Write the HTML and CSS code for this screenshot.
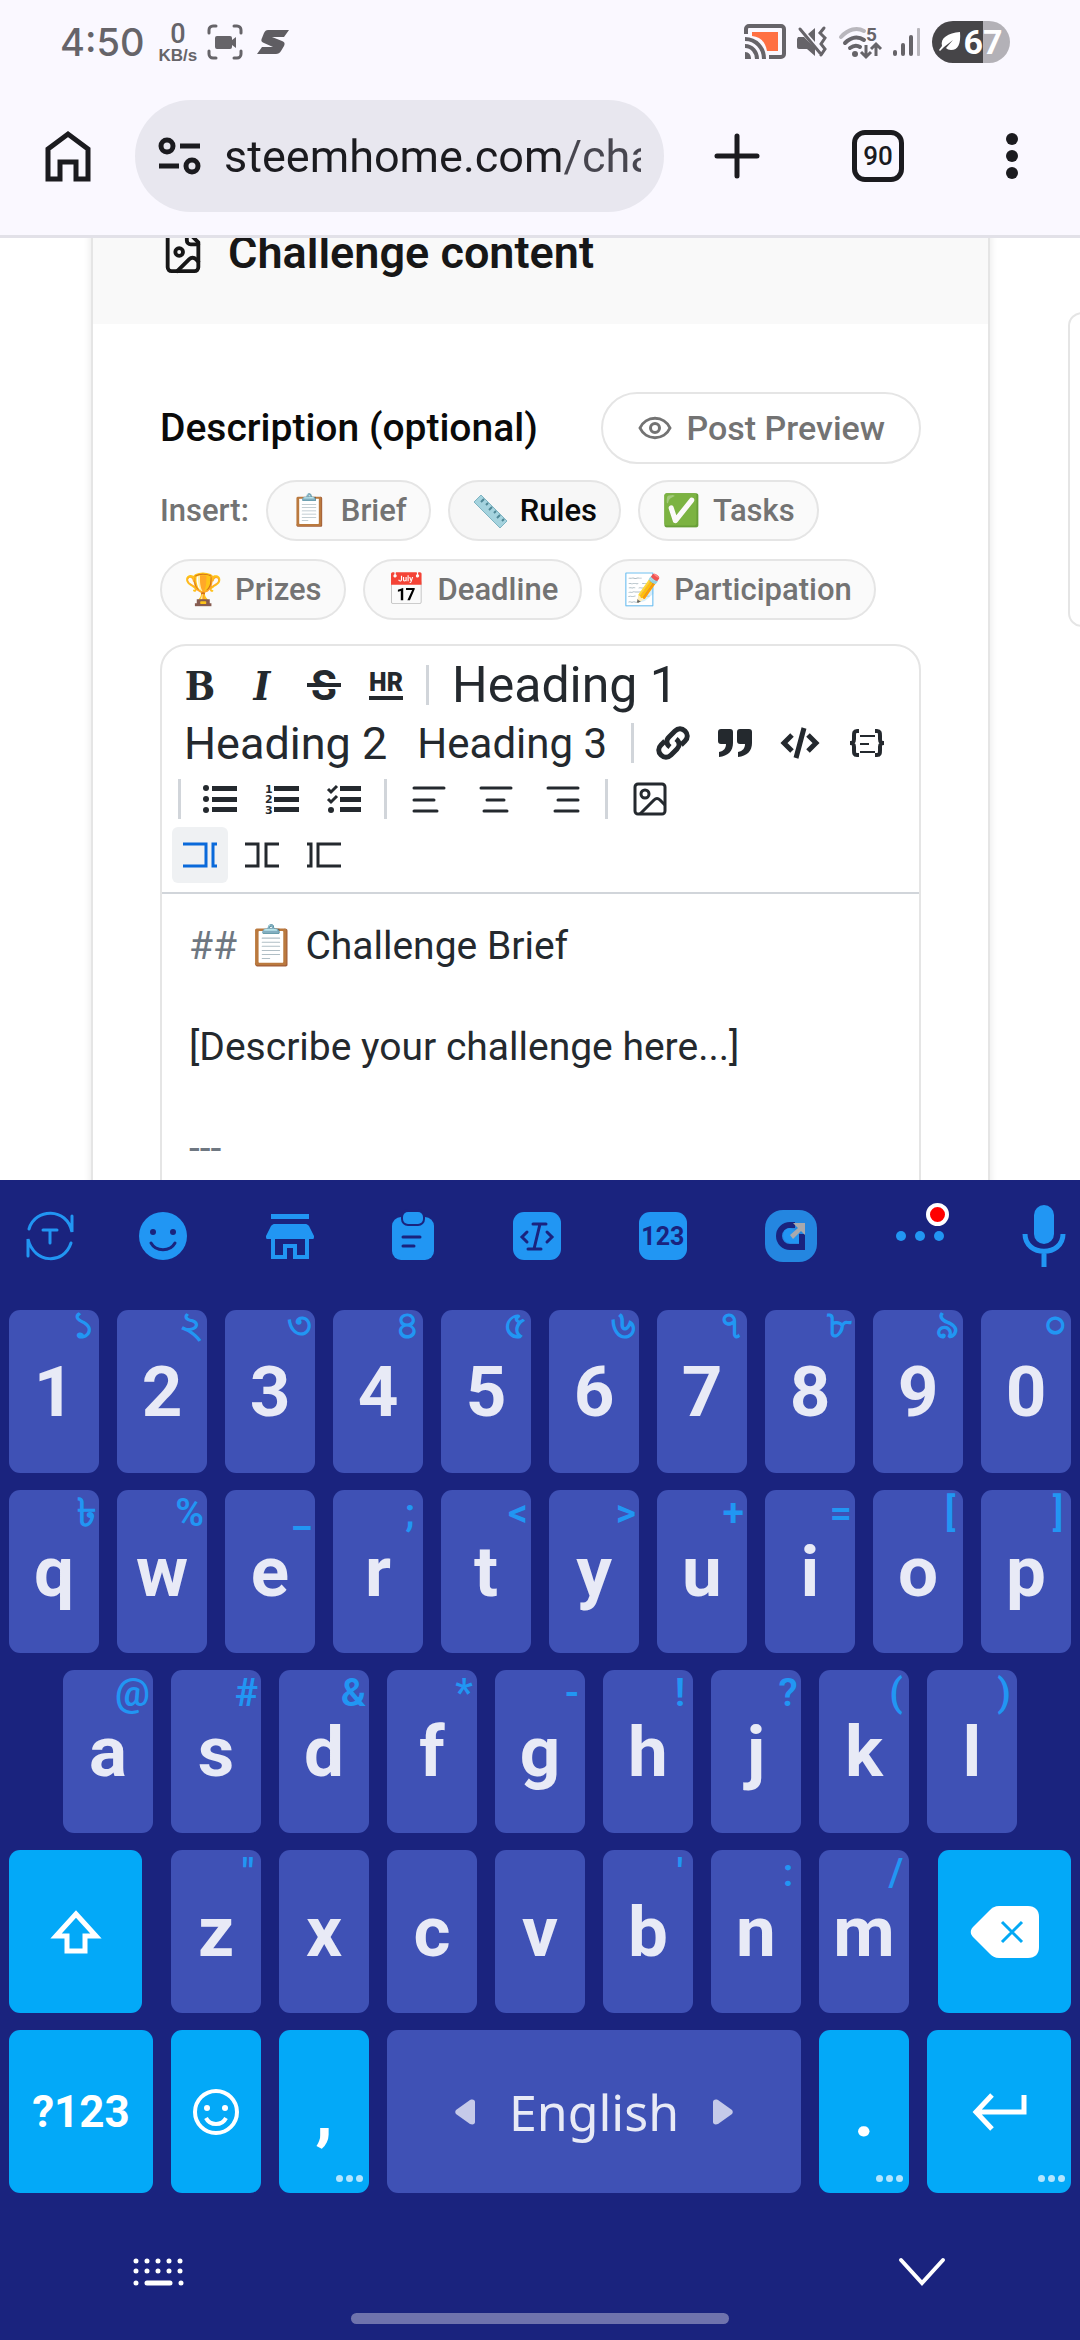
FILE: index.html
```html
<!DOCTYPE html>
<html lang="en">
<head>
  <meta charset="UTF-8">
  <meta name="viewport" content="width=device-width, initial-scale=1.0">
  <title>Challenge content</title>
  <link rel="stylesheet" href="styles.css">
</head>
<body>
  <header class="browser">
    <div class="status">
      <span class="time">4:50</span>
      <span class="speed"><b>0</b><small>KB/s</small></span>
      <svg class="st-rec" width="36" height="36" viewBox="0 0 36 36">
        <g fill="none" stroke="#666469" stroke-width="3" stroke-linecap="round"><path d="M2 9V6a4 4 0 0 1 4-4h3M27 2h3a4 4 0 0 1 4 4v3M34 27v3a4 4 0 0 1-4 4h-3M9 34H6a4 4 0 0 1-4-4v-3"/></g>
        <path fill="#666469" d="M10 12h13a2 2 0 0 1 2 2v2l4-3v11l-4-3v2a2 2 0 0 1-2 2H10a2 2 0 0 1-2-2v-9a2 2 0 0 1 2-2z"/>
      </svg>
      <svg class="st-logo" width="32" height="26" viewBox="0 0 32 26"><path fill="#5f5d62" d="M11 1h21l-5 7H15l10 4c3 1 3 3 2 5l-3 5c-1 2-3 3-5 3H0l5-7h11L7 14c-3-1-3-3-2-5l2-5c1-2 2-3 4-3z"/></svg>
      <span class="fill"></span>
      <svg width="42" height="36" viewBox="0 0 42 36">
        <path fill="#ff7043" d="M8 8h26v19H23C21 17 16 13 8 12z"/>
        <path fill="none" stroke="#666469" stroke-width="4" d="M2 10V5a3 3 0 0 1 3-3h32a3 3 0 0 1 3 3v25a3 3 0 0 1-3 3H25"/>
        <g fill="none" stroke="#666469" stroke-width="4"><path d="M1 15c11 0 19 9 19 20M1 22c7 0 12 6 12 13"/></g><path fill="#666469" d="M1 28c4 0 6 3 6 7H1z"/>
      </svg>
      <svg width="30" height="32" viewBox="0 0 30 32">
        <path fill="#666469" d="M1 11h6L18 22v8l-8-7H2a2 2 0 0 1-2-2v-8zM18 2v14l-7-8z"/>
        <path fill="none" stroke="#666469" stroke-width="3" stroke-linecap="round" d="M3 3l20 24M27 2l-4 5 5 5-4 6 4 5-4 6"/>
      </svg>
      <svg width="44" height="34" viewBox="0 0 44 34">
        <g fill="none" stroke-width="4" stroke-linecap="round"><path stroke="#b9b7bd" d="M3 12c7-8 16-10 23-6"/><path stroke="#666469" d="M7 18c6-6 13-7 19-3M12 23c4-3 7-3 10-1"/></g>
        <circle cx="17" cy="29" r="3" fill="#666469"/>
        <path fill="none" stroke="#666469" stroke-width="3" d="M28 20v11M23 27l5 5 5-5M38 31V19M33 24l5-5 5 5"/>
        <text x="28" y="16" class="wifi-num">5</text>
      </svg>
      <svg width="28" height="30" viewBox="0 0 28 30">
        <g fill="#666469"><rect y="23" width="4" height="6" rx="2"/><rect x="8" y="16" width="4" height="13" rx="2"/><rect x="16" y="8" width="4" height="21" rx="2"/></g><rect x="24" y="1" width="3" height="28" rx="1" fill="#b9b7bd"/>
      </svg>
      <span class="battery">
        <svg width="22" height="22" viewBox="0 0 22 22"><path fill="#fff" d="M21 1c1 12-2 18-9 18-2 0-4-1-5-2l7-8-9 7-4 4-1-1 3-4C1 7 9 2 21 1z"/></svg>67</span>
    </div>
    <div class="bar">
      <button class="plain" aria-label="Home">
        <svg width="46" height="52" viewBox="0 0 46 52"><path fill="none" stroke="#1b1b1f" stroke-width="5" d="M3 19 23 4l20 15v30H31V32H15v17H3z"/></svg>
      </button>
      <div class="omnibox">
        <svg width="44" height="38" viewBox="0 0 44 38"><g fill="none" stroke="#1b1b1f" stroke-width="5"><circle cx="9" cy="9" r="6"/><path d="M22 9h20M1 29h20"/><circle cx="34" cy="29" r="6"/></g></svg>
        <input class="url" type="text" value="steemhome.com/challenges" aria-label="Address">
      </div>
      <button class="plain new-tab" aria-label="New tab">
        <svg width="46" height="46" viewBox="0 0 46 46"><path stroke="#1b1b1f" stroke-width="5" stroke-linecap="round" d="M3 23h40M23 3v40"/></svg>
      </button>
      <button class="tabs">90</button>
      <button class="plain menu" aria-label="Menu">
        <svg width="12" height="46" viewBox="0 0 12 46" fill="#1b1b1f"><circle cx="6" cy="6" r="6"/><circle cx="6" cy="23" r="6"/><circle cx="6" cy="40" r="6"/></svg>
      </button>
    </div>
  </header>

  <main class="page">
    <section class="card">
      <div class="card-head">
        <svg width="46" height="46" viewBox="0 0 24 24" fill="none" stroke="#171717" stroke-width="2" stroke-linejoin="round" stroke-linecap="round"><path d="M15 2H6a2 2 0 0 0-2 2v16a2 2 0 0 0 2 2h12a2 2 0 0 0 2-2V7z"/><path d="M14 2v4a2 2 0 0 0 2 2h4"/><circle cx="10" cy="12" r="2"/><path d="m20 17-1.3-1.3a2.4 2.4 0 0 0-3.4 0L9 22"/></svg>
        <h2>Challenge content</h2>
      </div>
      <div class="card-body">
        <div class="desc-row">
          <h3>Description (optional)</h3>
          <button class="preview">
            <svg width="36" height="36" viewBox="0 0 24 24" fill="none" stroke="#737373" stroke-width="2"><path d="M2 12a11 11 0 0 1 20 0 11 11 0 0 1-20 0z"/><circle cx="12" cy="12" r="3"/></svg>
            Post Preview
          </button>
        </div>
        <div class="chips">
          <span class="insert">Insert:</span>
          <button class="chip"><i>📋</i>Brief</button>
          <button class="chip active">
            <svg width="36" height="36" viewBox="0 0 36 36"><path fill="#a5d3de" stroke="#7fb4c2" d="M9 2 35 28l-7 7L2 9z"/><path stroke="#4f8796" stroke-width="2" d="m12 6-3 3M16 10l-2 2M20 14l-3 3M24 18l-2 2M28 22l-3 3M32 26l-2 2"/></svg>
            Rules
          </button>
          <button class="chip"><i>✅</i>Tasks</button>
          <button class="chip"><i>🏆</i>Prizes</button>
          <button class="chip"><i>📅</i>Deadline</button>
          <button class="chip"><i>📝</i>Participation</button>
        </div>

        <div class="editor">
          <div class="tools">
            <div class="tool-row">
              <button class="tool serif">B</button>
              <button class="tool serif italic">I</button>
              <button class="tool strike">S</button>
              <button class="tool hr"><span>HR</span></button>
              <span class="sep"></span>
              <button class="tool h1">Heading 1</button>
            </div>
            <div class="tool-row">
              <button class="tool h2">Heading 2</button>
              <button class="tool h3">Heading 3</button>
              <span class="sep"></span>
              <button class="tool" aria-label="Link"><svg width="34" height="34" viewBox="0 0 34 34" fill="none" stroke="#24292e" stroke-width="5"><path d="M14 21c-4-3-4-7-1-10l6-6c3-3 7-3 10 0s3 7 0 10l-4 4"/><path d="M20 13c4 3 4 7 1 10l-6 6c-3 3-7 3-10 0s-3-7 0-10l4-4"/></svg></button>
              <button class="tool" aria-label="Quote"><svg width="34" height="28" viewBox="0 0 34 28" fill="#24292e"><path d="M3 0h9a3 3 0 0 1 3 3v11c0 8-5 13-14 14v-5c5-1 7-4 7-8H3a3 3 0 0 1-3-3V3a3 3 0 0 1 3-3z"/><path d="M22 0h9a3 3 0 0 1 3 3v11c0 8-5 13-14 14v-5c5-1 7-4 7-8h-5a3 3 0 0 1-3-3V3a3 3 0 0 1 3-3z"/></svg></button>
              <button class="tool wide" aria-label="Code"><svg width="40" height="32" viewBox="0 0 40 32" fill="none" stroke="#24292e" stroke-width="5"><path d="m12 8-8 8 8 8M28 8l8 8-8 8M24 1l-8 30"/></svg></button>
              <button class="tool wide" aria-label="Code block"><svg width="36" height="28" viewBox="0 0 36 28" fill="none" stroke="#24292e"><path stroke-width="4" d="M10 2H8C5 2 5 4 5 7v3c0 3-1 4-4 4 3 0 4 1 4 4v3c0 3 0 5 3 5h2M26 2h2c3 0 3 2 3 5v3c0 3 1 4 4 4-3 0-4 1-4 4v3c0 3 0 5-3 5h-2"/><path stroke-width="2" d="M11 7h15M11 15h9M11 23h15"/></svg></button>
            </div>
            <div class="tool-row">
              <span class="sep"></span>
              <button class="tool" aria-label="Bullet list"><svg width="34" height="28" viewBox="0 0 34 28" fill="#24292e"><circle cx="3" cy="3" r="3"/><circle cx="3" cy="14" r="3"/><circle cx="3" cy="25" r="3"/><path d="M9 1h25v5H9zM9 12h25v5H9zM9 22h25v5H9z"/></svg></button>
              <button class="tool" aria-label="Numbered list"><svg width="34" height="30" viewBox="0 0 34 30" fill="#24292e"><path d="M9 2h25v5H9zM9 13h25v5H9zM9 23h25v5H9z"/><text x="0" y="9" class="ol-num">1</text><text x="0" y="19" class="ol-num">2</text><text x="0" y="30" class="ol-num">3</text></svg></button>
              <button class="tool" aria-label="Check list"><svg width="34" height="28" viewBox="0 0 34 28" fill="#24292e"><path d="M13 1h21v5H13zM13 12h21v5H13zM13 22h21v5H13z"/><circle cx="4" cy="25" r="3"/><path fill="none" stroke="#24292e" stroke-width="3" d="m1 4 3 3 6-6M1 14l3 3 6-6"/></svg></button>
              <span class="sep"></span>
              <button class="tool wide" aria-label="Align left"><svg width="34" height="28" viewBox="0 0 34 28" stroke="#24292e" stroke-width="3" stroke-linecap="round"><path d="M2 3h30M2 15h20M2 26h23"/></svg></button>
              <button class="tool wide" aria-label="Align center"><svg width="34" height="28" viewBox="0 0 34 28" stroke="#24292e" stroke-width="3" stroke-linecap="round"><path d="M2 3h30M8 15h17M5 26h23"/></svg></button>
              <button class="tool wide" aria-label="Align right"><svg width="34" height="28" viewBox="0 0 34 28" stroke="#24292e" stroke-width="3" stroke-linecap="round"><path d="M2 3h30M12 15h20M9 26h23"/></svg></button>
              <span class="sep"></span>
              <button class="tool wide" aria-label="Image"><svg width="34" height="34" viewBox="0 0 34 34" fill="none" stroke="#24292e" stroke-width="3"><rect x="2" y="2" width="30" height="30" rx="3"/><circle cx="12" cy="12" r="4"/><path d="m7 32 14-14c2-2 4-2 6 0l5 5"/></svg></button>
            </div>
            <div class="tool-row">
              <button class="tool on" aria-label="Editor only"><svg width="34" height="26" viewBox="0 0 34 26" fill="none" stroke="#0969da" stroke-width="3"><path d="M0 2h23v22H0M34 2h-4v22h4"/></svg></button>
              <button class="tool" aria-label="Split view"><svg width="34" height="26" viewBox="0 0 34 26" fill="none" stroke="#24292e" stroke-width="3"><path d="M0 2h13v22H0M34 2H21v22h13"/></svg></button>
              <button class="tool" aria-label="Preview only"><svg width="34" height="26" viewBox="0 0 34 26" fill="none" stroke="#24292e" stroke-width="3"><path d="M0 2h4v22H0M34 2H11v22h23"/></svg></button>
            </div>
          </div>
          <div class="text" contenteditable="true" spellcheck="false">
            <p><span class="mark">##</span> 📋 Challenge Brief</p>
            <p>[Describe your challenge here...]</p>
            <p><span class="mark">---</span></p>
          </div>
        </div>
      </div>
    </section>
    <aside class="next-card"></aside>
  </main>

  <div class="keyboard">
    <div class="kb-tools">
      <button class="plain translate" aria-label="Translate"><svg width="48" height="50" viewBox="0 0 48 50" fill="none" stroke="#2196f3" stroke-width="3" stroke-linecap="round"><path d="M3 18C9-3 41-4 46 21V5M45 32C38 54 8 53 2 28v17M17 19h14M24 19v13"/></svg></button>
      <button class="plain" aria-label="Emoji"><svg width="48" height="48" viewBox="0 0 48 48"><circle cx="24" cy="24" r="24" fill="#2196f3"/><g fill="#1a237e"><circle cx="14" cy="20" r="3"/><circle cx="34" cy="20" r="3"/></g><path fill="none" stroke="#1a237e" stroke-width="3" stroke-linecap="round" d="M12 31c5 9 19 9 24 0"/></svg></button>
      <button class="plain" aria-label="Store"><svg width="48" height="46" viewBox="0 0 48 46"><path fill="#2196f3" d="M5 1h38v5H5zM8 11h32c1 0 2 1 3 2l5 10c0 1 0 3-1 3H1c-1 0-1-2-1-3l5-10c1-1 2-2 3-2z"/><path fill="none" stroke="#2196f3" stroke-width="4" d="M7 24v20h12V33h10v11h12V24"/></svg></button>
      <button class="plain" aria-label="Clipboard"><svg width="42" height="48" viewBox="0 0 42 48"><rect y="5" width="42" height="43" rx="9" fill="#2196f3"/><rect x="9" y="-3" width="24" height="17" rx="7" fill="#1a237e"/><rect x="11" width="20" height="12" rx="5" fill="#2196f3"/><path stroke="#1a237e" stroke-width="3" stroke-linecap="round" d="M11 25h17M11 34h11"/></svg></button>
      <button class="plain" aria-label="Text cursor"><svg width="48" height="48" viewBox="0 0 48 48"><rect width="48" height="48" rx="11" fill="#2196f3"/><path fill="none" stroke="#1a237e" stroke-width="3" stroke-linecap="round" d="M20 12h13M15 37h13M27 12l-6 25M14 20l-5 5 5 5M34 20l5 5-5 5"/></svg></button>
      <button class="num">123</button>
      <button class="plain" aria-label="Search"><svg width="52" height="52" viewBox="0 0 52 52"><rect width="52" height="52" rx="18" fill="#2486e0"/><path fill="none" stroke="#1a237e" stroke-width="6" d="M30 15h-5a11 11 0 0 0 0 22h12V24"/><path fill="#2196f3" d="M25 18c-9 0-9 15 0 15h9V22z"/><path fill="#a9a9ad" d="M28 13h12v12l-4-4-8 8-3-4 8-7z"/></svg></button>
      <button class="plain more" aria-label="More"><svg width="48" height="10" viewBox="0 0 48 10" fill="#2196f3"><circle cx="5" cy="5" r="5"/><circle cx="24" cy="5" r="5"/><circle cx="43" cy="5" r="5"/></svg><span class="dot"></span></button>
      <button class="plain" aria-label="Voice"><svg width="44" height="62" viewBox="0 0 44 62"><rect x="12" width="20" height="39" rx="10" fill="#2196f3"/><path fill="none" stroke="#2196f3" stroke-width="5" d="M3 29c0 23 38 23 38 0M22 47v15"/></svg></button>
    </div>

    <div class="keys">
      <button class="key">1<sup class="bn">১</sup></button>
      <button class="key">2<sup class="bn">২</sup></button>
      <button class="key">3<sup class="bn">৩</sup></button>
      <button class="key">4<sup class="bn">৪</sup></button>
      <button class="key">5<sup class="bn">৫</sup></button>
      <button class="key">6<sup class="bn">৬</sup></button>
      <button class="key">7<sup class="bn">৭</sup></button>
      <button class="key">8<sup class="bn">৮</sup></button>
      <button class="key">9<sup class="bn">৯</sup></button>
      <button class="key">0<sup class="bn">০</sup></button>

      <button class="key">q<sup>৳</sup></button>
      <button class="key">w<sup>%</sup></button>
      <button class="key">e<sup>_</sup></button>
      <button class="key">r<sup>;</sup></button>
      <button class="key">t<sup>&lt;</sup></button>
      <button class="key">y<sup>&gt;</sup></button>
      <button class="key">u<sup>+</sup></button>
      <button class="key">i<sup>=</sup></button>
      <button class="key">o<sup>[</sup></button>
      <button class="key">p<sup>]</sup></button>

      <button class="key indent">a<sup>@</sup></button>
      <button class="key">s<sup>#</sup></button>
      <button class="key">d<sup>&amp;</sup></button>
      <button class="key">f<sup>*</sup></button>
      <button class="key">g<sup>-</sup></button>
      <button class="key">h<sup>!</sup></button>
      <button class="key">j<sup>?</sup></button>
      <button class="key">k<sup>(</sup></button>
      <button class="key">l<sup>)</sup></button>

      <button class="key fn shift" aria-label="Shift"><svg width="54" height="44" viewBox="0 0 54 44"><path fill="none" stroke="#fff" stroke-width="5" d="M27 4 7 26h11v15h18V26h11z"/></svg></button>
      <button class="key">z<sup>"</sup></button>
      <button class="key">x</button>
      <button class="key">c</button>
      <button class="key">v</button>
      <button class="key">b<sup>'</sup></button>
      <button class="key">n<sup>:</sup></button>
      <button class="key">m<sup>/</sup></button>
      <button class="key fn back" aria-label="Backspace"><svg width="68" height="52" viewBox="0 0 68 52"><path fill="#fff" d="M28 0h29c7 0 11 4 11 11v30c0 7-4 11-11 11H28c-4 0-7-2-9-4L2 31c-3-3-3-7 0-10L19 4c2-2 5-4 9-4z"/><path stroke="#03a9f4" stroke-width="3" d="m31 16 20 20M51 16 31 36"/></svg></button>

      <button class="key fn sym">?123</button>
      <button class="key fn" aria-label="Emoji"><svg width="48" height="48" viewBox="0 0 48 48" fill="none" stroke="#fff" stroke-width="4"><circle cx="24" cy="24" r="21"/><path d="M14 30c4 8 16 8 20 0"/><g fill="#fff" stroke="none"><circle cx="15" cy="20" r="3"/><circle cx="33" cy="20" r="3"/></g></svg></button>
      <button class="key fn">,<sub><i></i><i></i><i></i></sub></button>
      <button class="key space"><svg width="20" height="26" viewBox="0 0 20 26"><path fill="#c5cae9" d="M1 11 15 1c3-1 5 0 5 2v20c0 2-2 3-5 2L1 15c-1-1-1-3 0-4z"/></svg>English<svg width="20" height="26" viewBox="0 0 20 26"><path fill="#c5cae9" d="M19 11 5 1C2 0 0 1 0 3v20c0 2 2 3 5 2l14-10c1-1 1-3 0-4z"/></svg></button>
      <button class="key fn">.<sub><i></i><i></i><i></i></sub></button>
      <button class="key fn enter" aria-label="Enter"><svg width="54" height="36" viewBox="0 0 54 36"><path fill="none" stroke="#fff" stroke-width="5" d="M52 1v17H4M20 1 4 18l16 17"/></svg><sub><i></i><i></i><i></i></sub></button>
    </div>

    <div class="nav">
      <button class="plain" aria-label="Switch keyboard"><svg width="52" height="28" viewBox="0 0 52 28" fill="none" stroke="#fff" stroke-width="5" stroke-linecap="round"><path stroke-dasharray="0 11" d="M3 3h46M3 13h46"/><path d="M3 25h0M14 25h23M48 25h0"/></svg></button>
      <button class="plain" aria-label="Hide keyboard"><svg width="46" height="28" viewBox="0 0 46 28"><path fill="none" stroke="#fff" stroke-width="4" stroke-linecap="round" d="m2 2 21 23L44 2"/></svg></button>
    </div>
    <div class="home-bar"></div>
  </div>
</body>
</html>
```

FILE: styles.css
```css
* {
  box-sizing: border-box;
}

body {
  margin: 0;
  height: 100vh;
  display: flex;
  flex-direction: column;
  overflow: hidden;
  background: #fff;
  font-family: Roboto, sans-serif;
  color: #171717;
}

button {
  font-family: inherit;
  margin: 0;
  padding: 0;
  border: 0;
  background: none;
  color: inherit;
  cursor: pointer;
}

svg {
  display: block;
  flex: none;
  overflow: visible;
}

.plain {
  position: relative;
  flex: none;
}

/* browser top */
.browser {
  flex: none;
  background: #faf8ff;
  border-bottom: 3px solid #e2e1e8;
}

.status {
  display: flex;
  align-items: center;
  height: 84px;
  padding: 0 70px 0 60px;
  color: #666469;
}

.time {
  font-family: Inter, sans-serif;
  font-size: 38px;
  font-weight: 500;
}

.speed {
  display: flex;
  flex-direction: column;
  align-items: center;
  margin: 0 10px 0 14px;
}

.speed b {
  font-size: 27px;
  line-height: 26px;
  font-weight: 500;
}

.speed small {
  font-family: "Liberation Sans", sans-serif;
  font-size: 17px;
  line-height: 17px;
  font-weight: bold;
}

.st-logo {
  margin-left: 14px;
}

.fill {
  flex: 1;
}

.fill ~ svg {
  margin-right: 11px;
}

.wifi-num {
  font: 700 19px Roboto, sans-serif;
  fill: #666469;
}

.battery {
  display: flex;
  align-items: center;
  justify-content: center;
  gap: 2px;
  width: 78px;
  height: 42px;
  border-radius: 21px;
  background: linear-gradient(to right, #464548 66%, #b3b1b7 66%);
  color: #fff;
  font-size: 34px;
  font-weight: bold;
}

.bar {
  display: flex;
  align-items: center;
  padding: 16px 62px 23px 45px;
}

.omnibox {
  flex: 1;
  min-width: 0;
  display: flex;
  align-items: center;
  gap: 22px;
  height: 112px;
  margin: 0 50px 0 44px;
  padding: 0 23px;
  border-radius: 56px;
  background: #e8e7ef;
}

.url {
  flex: 1;
  min-width: 0;
  padding: 0;
  border: 0;
  outline: 0;
  font: 45px Roboto, sans-serif;
  /* host is darker than the path */
  color: transparent;
  background: linear-gradient(to right, #1b1b1f 338px, #47464f 338px);
  -webkit-background-clip: text;
  background-clip: text;
}

.tabs {
  width: 52px;
  height: 52px;
  margin: 0 102px 0 92px;
  border: 5px solid #1b1b1f;
  border-radius: 13px;
  color: #1b1b1f;
  font-size: 26px;
  font-weight: 500;
}

/* page */
.page {
  flex: 1;
  min-height: 0;
  display: flex;
  align-items: flex-start;
  overflow: hidden;
  padding-left: 91px;
}

.card {
  flex: none;
  width: calc(100vw - 181px);
  border: 2px solid #e5e5e5;
  box-shadow: 0 2px 8px rgba(0, 0, 0, 0.1);
  /* scrolled a little under the browser bar */
  margin-top: -60px;
}

.next-card {
  flex: none;
  width: 400px;
  height: 315px;
  margin: 74px 0 0 78px;
  border: 2px solid #e5e5e5;
  border-radius: 14px;
}

.card-head {
  display: flex;
  align-items: center;
  gap: 22px;
  height: 144px;
  padding: 0 67px;
  background: #f9f9f9;
}

h2,
h3 {
  margin: 0;
}

h2 {
  font-size: 45px;
  font-weight: 600;
}

h3 {
  font-size: 39px;
  font-weight: 500;
  color: #0a0a0a;
}

.card-body {
  padding: 68px 67px;
}

.desc-row {
  display: flex;
  align-items: center;
  justify-content: space-between;
}

.preview {
  display: flex;
  align-items: center;
  gap: 14px;
  height: 72px;
  padding: 0 34px;
  border: 2px solid #e5e5e5;
  border-radius: 36px;
  color: #737373;
  font-size: 34px;
  font-weight: 500;
}

.chips {
  display: flex;
  flex-wrap: wrap;
  align-items: center;
  gap: 18px 17px;
  margin: 16px 0 24px;
  color: #737373;
  font-size: 31px;
  font-weight: 500;
}

.chip {
  display: flex;
  align-items: center;
  gap: 12px;
  height: 61px;
  padding: 0 22px;
  border: 2px solid #e5e5e5;
  border-radius: 31px;
  background: #fafafa;
  font-size: 31px;
  font-weight: 500;
}

.chip i {
  font-style: normal;
}

.chip.active {
  background: #f7f7f7;
  color: #0a0a0a;
}

/* markdown editor */
.editor {
  border: 2px solid #e5e5e5;
  border-radius: 26px;
  color: #24292e;
}

.tools {
  padding: 9px 10px;
  border-bottom: 2px solid #d1d5da;
}

.tool-row {
  display: flex;
  align-items: center;
}

.tool {
  position: relative;
  display: flex;
  align-items: center;
  justify-content: center;
  width: 56px;
  height: 56px;
  margin-right: 6px;
  border-radius: 6px;
}

.tool.wide {
  width: 61px;
}

.tool.on {
  background: #eff1f3;
}

.serif {
  font: bold 40px "DejaVu Serif Condensed", "Liberation Serif", serif;
}

.italic {
  font-style: italic;
}

.strike {
  font-size: 42px;
  font-weight: bold;
}

/* bar through the S, with a gap under it */
.strike::after {
  content: "";
  position: absolute;
  left: 11px;
  right: 11px;
  top: 26px;
  height: 4px;
  background: #24292e;
  border-bottom: 2px solid #fff;
  box-sizing: content-box;
}

.hr span {
  border-bottom: 4px solid #24292e;
  font: 900 25px/26px Roboto, sans-serif;
}

.tool.h1,
.tool.h2,
.tool.h3 {
  width: auto;
  padding: 0 12px;
}

.tool.h1 {
  height: 60px;
  font-size: 50px;
}

.h2 {
  font-size: 45px;
}

.h3 {
  font-size: 42px;
}

.sep {
  width: 3px;
  height: 40px;
  margin: 0 11px 0 6px;
  background: #d1d5da;
}

.ol-num {
  font: 900 11px "DejaVu Sans", sans-serif;
}

.text {
  padding: 27px;
  outline: 0;
  font-size: 39px;
  line-height: 51px;
}

.text p {
  margin: 0 0 50px;
}

.mark {
  color: #6e7781;
}

/* keyboard */
.keyboard {
  flex: none;
  background: #1a237e;
}

.kb-tools {
  display: flex;
  align-items: center;
  justify-content: space-between;
  height: 112px;
  margin-bottom: 18px;
  padding: 0 14px 0 26px;
}

.translate {
  margin-right: -13px;
}

.num {
  width: 48px;
  height: 48px;
  border-radius: 11px;
  background: #2196f3;
  color: #1a237e;
  font-size: 25px;
  font-weight: bold;
  text-align: center;
}

.dot {
  position: absolute;
  top: -28px;
  right: -5px;
  width: 23px;
  height: 23px;
  border: 4px solid #fff;
  border-radius: 50%;
  background: #f00;
}

.keys {
  display: grid;
  grid-template-columns: repeat(20, 1fr);
  grid-auto-rows: 163px;
  gap: 17px 18px;
  padding: 0 9px;
}

.key {
  position: relative;
  grid-column: span 2;
  display: flex;
  align-items: center;
  justify-content: center;
  border-radius: 11px;
  background: #3f51b5;
  color: #e8eaf6;
  font-size: 71px;
  font-weight: bold;
}

.key.indent {
  grid-column: 2 / span 2;
}

.key.fn {
  background: #03a9f8;
  color: #fff;
}

.key.shift,
.key.back,
.key.sym,
.key.enter {
  grid-column: span 3;
}

.key.shift {
  margin-right: 11px;
}

.key.back {
  margin-left: 11px;
}

.key.sym {
  font-size: 44px;
}

.key.space {
  grid-column: span 8;
  gap: 34px;
  font: 50px "Noto Sans", sans-serif;
}

.key sup {
  position: absolute;
  top: 0;
  right: 3px;
  min-width: 20px;
  text-align: center;
  color: #2196f3;
  font-size: 39px;
  line-height: 46px;
  font-weight: 600;
}

.key sup.bn {
  font-size: 38px;
  line-height: 30px;
  font-weight: 600;
}

.key sub {
  position: absolute;
  right: 6px;
  bottom: 11px;
  display: flex;
  gap: 3px;
}

.key sub i {
  width: 7px;
  height: 7px;
  border-radius: 50%;
  background: #b4e5fd;
}

.nav {
  display: flex;
  align-items: center;
  justify-content: space-between;
  height: 28px;
  margin-top: 65px;
  padding: 0 135px 0 133px;
}

.home-bar {
  width: 35%;
  height: 11px;
  margin: 27px auto 16px;
  border-radius: 6px;
  background: #6f73ad;
}
```
